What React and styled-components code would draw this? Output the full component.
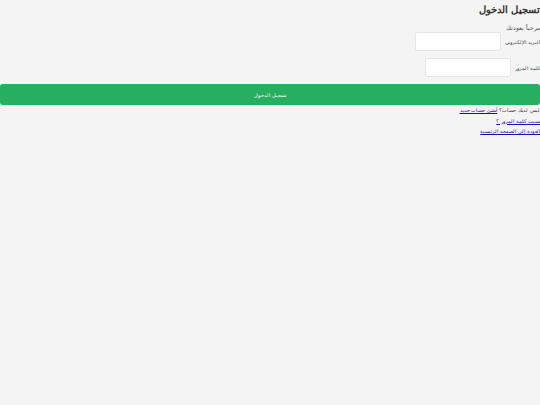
import React from "react";
import styled, { createGlobalStyle } from "styled-components";

const Global = createGlobalStyle`
    html, body {
        margin: 0;
        padding: 0;
        background: #f4f4f4;
    }
    body {
        font-family: "Liberation Sans", sans-serif;
        color: #333;
    }
`;

const Page = styled.div`
    direction: rtl;
    min-height: 405px;
    background: #f4f4f4;
`;

const Title = styled.h2`
    margin: 0;
    padding-top: 1px;
    font-size: 10px;
    font-weight: bold;
    line-height: 18px;
    color: #333;
`;

const Welcome = styled.p`
    margin: 5px 0 0;
    font-size: 5.5px;
    line-height: 8px;
    color: #444;
`;

const Field = styled.div`
    display: flex;
    align-items: center;
    gap: 4px;
    margin-top: ${(p) => p.$top}px;
`;

const Label = styled.label`
    font-size: 5px;
    word-spacing: 1px;
    color: #444;
`;

const Input = styled.input`
    width: 86px;
    height: 19px;
    box-sizing: border-box;
    border: 1px solid #e6e6e6;
    border-radius: 2px;
    background: #fff;
    padding: 0 4px;
`;

const Button = styled.button`
    display: block;
    width: 100%;
    height: 21px;
    margin-top: 7px;
    border: none;
    border-radius: 3px;
    background: #27ae60;
    color: #fff;
    font-family: "Liberation Sans", sans-serif;
    font-size: 5px;
    word-spacing: 1px;
`;

const Links = styled.div`
    margin-top: 0;
    font-size: 5px;
    word-spacing: 0.5px;
    line-height: 10.5px;
    color: #333;
`;

const A = styled.a`
    color: #1a0dab;
    text-decoration: underline;
`;

export default function App() {
    return (
        <Page>
            <Global />
            <Title>تسجيل الدخول</Title>
            <Welcome>مرحباً بعودتك</Welcome>
            <Field $top={0}>
                <Label>البريد الإلكتروني</Label>
                <Input type="email" />
            </Field>
            <Field $top={7}>
                <Label>كلمة المرور</Label>
                <Input type="password" />
            </Field>
            <Button>تسجيل الدخول</Button>
            <Links>
                <div>
                    ليس لديك حساب؟ <A href="#">أنشئ حساب جديد</A>
                </div>
                <div>
                    <A href="#">نسيت كلمة المرور ؟</A>
                </div>
                <div>
                    <A href="#">العودة إلى الصفحة الرئيسية</A>
                </div>
            </Links>
        </Page>
    );
}
